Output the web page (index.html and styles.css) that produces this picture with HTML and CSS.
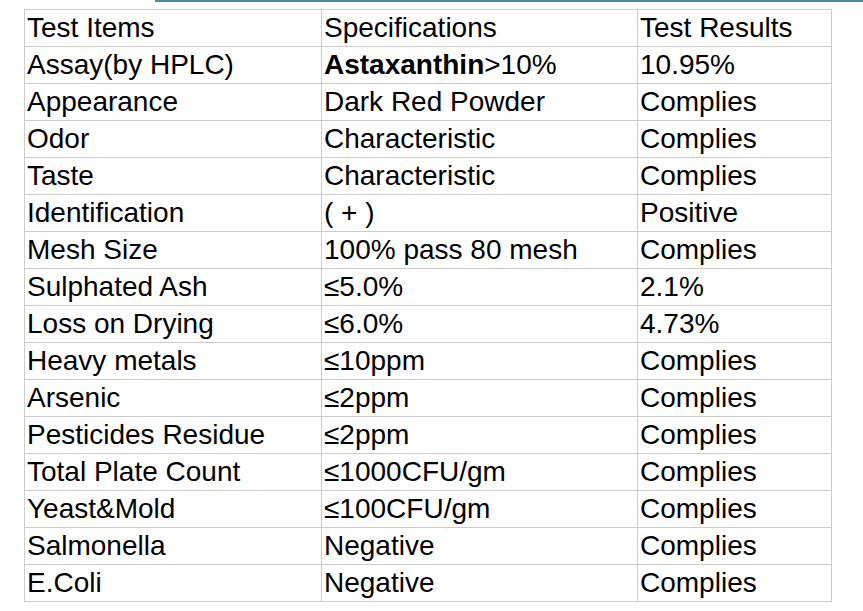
FILE: index.html
```html
<!DOCTYPE html>
<html>
<head>
<meta charset="utf-8">
<link rel="stylesheet" href="styles.css">
</head>
<body>
<div class="topbar"></div>
<table class="spec">
<colgroup><col class="c1"><col class="c2"><col class="c3"></colgroup>
<tr><td>Test Items</td><td>Specifications</td><td>Test Results</td></tr>
<tr><td>Assay(by HPLC)</td><td><b>Astaxanthin</b>&gt;10%</td><td>10.95%</td></tr>
<tr><td>Appearance</td><td>Dark Red Powder</td><td>Complies</td></tr>
<tr><td>Odor</td><td>Characteristic</td><td>Complies</td></tr>
<tr><td>Taste</td><td>Characteristic</td><td>Complies</td></tr>
<tr><td>Identification</td><td>( + )</td><td>Positive</td></tr>
<tr><td>Mesh Size</td><td>100% pass 80 mesh</td><td>Complies</td></tr>
<tr><td>Sulphated Ash</td><td>≤5.0%</td><td>2.1%</td></tr>
<tr><td>Loss on Drying</td><td>≤6.0%</td><td>4.73%</td></tr>
<tr><td>Heavy metals</td><td>≤10ppm</td><td>Complies</td></tr>
<tr><td>Arsenic</td><td>≤2ppm</td><td>Complies</td></tr>
<tr><td>Pesticides Residue</td><td>≤2ppm</td><td>Complies</td></tr>
<tr><td>Total Plate Count</td><td>≤1000CFU/gm</td><td>Complies</td></tr>
<tr><td>Yeast&amp;Mold</td><td>≤100CFU/gm</td><td>Complies</td></tr>
<tr><td>Salmonella</td><td>Negative</td><td>Complies</td></tr>
<tr><td>E.Coli</td><td>Negative</td><td>Complies</td></tr>
</table>
</body>
</html>
```
FILE: styles.css
```css
html, body {
  margin: 0;
  padding: 0;
  background: #ffffff;
}
body {
  font-family: "Liberation Sans", Arial, sans-serif;
  color: #000000;
}
.topbar {
  margin-left: 155px;
  height: 2px;
  background: #4b8d98;
}
.spec {
  margin-top: 7px;
  margin-left: 24px;
  border-collapse: collapse;
  table-layout: fixed;
  width: 807px;
}
.c1 { width: 297px; }
.c2 { width: 316px; }
.c3 { width: 194px; }
.spec td {
  border: 1px solid #cccccc;
  height: 35px;
  padding: 0 0 1px 2px;
  font-size: 28px;
  line-height: 35px;
  white-space: nowrap;
  vertical-align: middle;
  overflow: hidden;
}
.spec b {
  font-weight: bold;
}
```
